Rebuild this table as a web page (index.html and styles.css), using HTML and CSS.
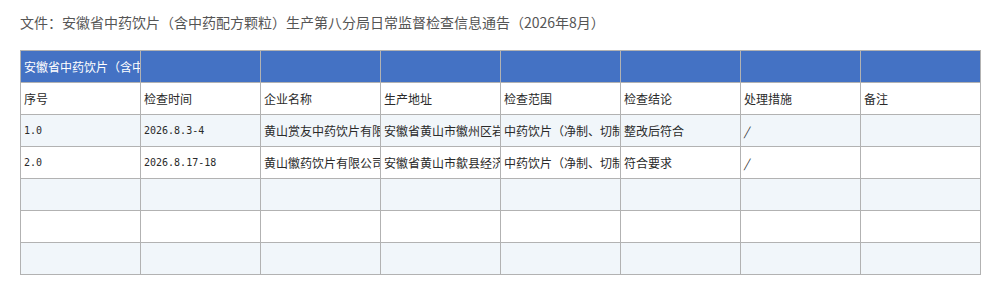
FILE: index.html
```html
<!DOCTYPE html>
<html lang="zh-CN">
<head>
<meta charset="utf-8">
<title>通告</title>
<link rel="stylesheet" href="styles.css">
</head>
<body>
<div class="page">
  <div class="title">文件：安徽省中药饮片（含中药配方颗粒）生产第八分局日常监督检查信息通告（2026年8月）</div>
  <table class="sheet">
    <colgroup>
      <col><col><col><col><col><col><col><col>
    </colgroup>
    <tr class="band">
      <td><div class="clip">安徽省中药饮片（含中</div></td>
      <td></td><td></td><td></td><td></td><td></td><td></td><td></td>
    </tr>
    <tr class="head">
      <td>序号</td><td>检查时间</td><td>企业名称</td><td>生产地址</td><td>检查范围</td><td>检查结论</td><td>处理措施</td><td>备注</td>
    </tr>
    <tr class="alt">
      <td class="num">1.0</td><td class="num">2026.8.3-4</td>
      <td><div class="clip">黄山赏友中药饮片有限</div></td>
      <td><div class="clip">安徽省黄山市徽州区岩</div></td>
      <td><div class="clip">中药饮片（净制、切制</div></td>
      <td>整改后符合</td><td class="slash">/</td><td></td>
    </tr>
    <tr>
      <td class="num">2.0</td><td class="num">2026.8.17-18</td>
      <td><div class="clip">黄山徽药饮片有限公司</div></td>
      <td><div class="clip">安徽省黄山市歙县经济</div></td>
      <td><div class="clip">中药饮片（净制、切制</div></td>
      <td>符合要求</td><td class="slash">/</td><td></td>
    </tr>
    <tr class="alt"><td></td><td></td><td></td><td></td><td></td><td></td><td></td><td></td></tr>
    <tr><td></td><td></td><td></td><td></td><td></td><td></td><td></td><td></td></tr>
    <tr class="alt"><td></td><td></td><td></td><td></td><td></td><td></td><td></td><td></td></tr>
  </table>
</div>
</body>
</html>
```

FILE: styles.css
```css
html, body {
  margin: 0;
  padding: 0;
  background: #ffffff;
}

.page {
  padding: 12px 20px 0 20px;
  font-family: "Noto Sans CJK SC", "Noto Sans", sans-serif;
}

.title {
  font-size: 14px;
  line-height: 20px;
  height: 20px;
  color: #555555;
  margin-bottom: 18px;
  white-space: nowrap;
}

.sheet {
  width: 961px;
  table-layout: fixed;
  border-collapse: collapse;
  font-size: 12px;
}

.sheet col {
  width: 120px;
}

.sheet td {
  border: 1px solid #b2b2b2;
  height: 32px;
  padding: 0 0 0 3px;
  box-sizing: border-box;
  white-space: nowrap;
  overflow: hidden;
  color: #2a2a2a;
  line-height: 18px;
  vertical-align: middle;
}

.sheet .clip {
  overflow: hidden;
  white-space: nowrap;
  width: 117px;
}

.sheet tr.band td {
  background: #4472c4;
  color: #ffffff;
}

.sheet tr.alt td {
  background: #f1f6fa;
}

.sheet td.num {
  font-family: "DejaVu Sans Mono", "Liberation Mono", monospace;
  font-size: 10px;
  color: #2a2a2a;
}

.sheet td.slash {
  font-style: italic;
  font-size: 12px;
}
```
